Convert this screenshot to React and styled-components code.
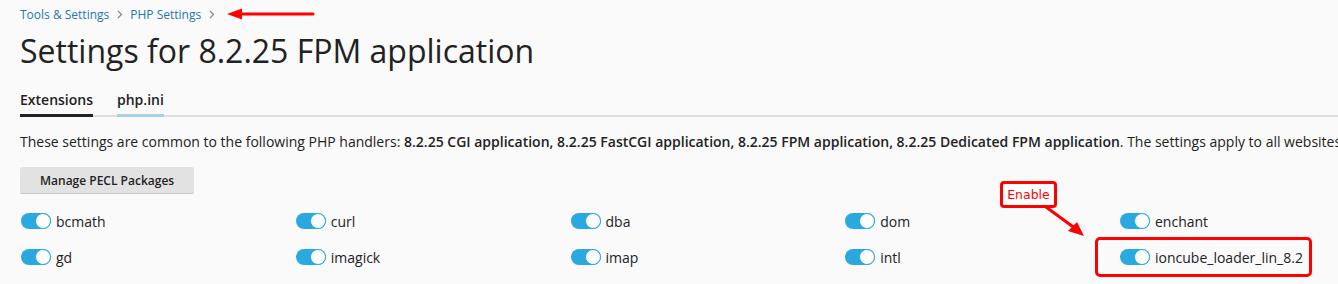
import React from 'react';
import styled, { createGlobalStyle } from 'styled-components';

const GlobalStyle = createGlobalStyle`
  body {
    margin: 0;
    background: #fafafa;
    font-family: "Open Sans", "Liberation Sans", sans-serif;
    color: #222;
  }
`;

const Page = styled.div`
  position: relative;
  padding: 5px 0 0 20px;
  width: 1318px;
  height: 279px;
  overflow: hidden;
`;

const Breadcrumbs = styled.div`
  display: flex;
  align-items: center;
  height: 18px;
  font-size: 12px;
`;

const Crumb = styled.a`
  color: #1d76b0;
  text-decoration: none;
`;

const Chevron = styled.span`
  display: inline-flex;
  margin: 0 7px 0 8px;
`;

const Title = styled.h1`
  margin: 8px 0 0;
  font-size: 32px;
  font-weight: 400;
  line-height: 40px;
  color: #222;
  white-space: nowrap;
`;

const Tabs = styled.div`
  display: flex;
  gap: 24px;
  margin-top: 19px;
  border-bottom: 2px solid #dedede;
  width: 1400px;
`;

const Tab = styled.div`
  font-size: 14px;
  font-weight: 600;
  line-height: 20px;
  padding-bottom: 4px;
  margin-bottom: -2px;
  border-bottom: 3px solid ${p => (p.$active ? '#222' : '#a9d0e4')};
  color: #222;
`;

const Intro = styled.p`
  margin: 15px 0 0;
  font-size: 14px;
  line-height: 20px;
  white-space: nowrap;
  b {
    font-weight: 600;
  }
`;

const Button = styled.button`
  margin-top: 15px;
  height: 27px;
  padding: 0 20px;
  border: 0;
  border-bottom: 1px solid #c6c6c6;
  border-radius: 2px;
  background: #e2e2e2;
  font-family: inherit;
  font-size: 12px;
  font-weight: 600;
  color: #222;
`;

const Grid = styled.div`
  display: grid;
  grid-template-columns: repeat(5, 274.75px);
  row-gap: 18px;
  margin-top: 18px;
`;

const Item = styled.label`
  display: flex;
  align-items: center;
  gap: 5px;
  height: 18px;
  font-size: 14px;
  white-space: nowrap;
`;

const Track = styled.span`
  position: relative;
  width: 30px;
  height: 16px;
  margin-left: 1px;
  border-radius: 8px;
  background: #29a9df;
`;

const Knob = styled.span`
  position: absolute;
  right: 0;
  top: 0;
  width: 14px;
  height: 14px;
  border-radius: 50%;
  border: 1px solid #29a9df;
  background: #fff;
`;

const Note = styled.div`
  position: absolute;
  left: 1000px;
  top: 181px;
  width: 51px;
  height: 21px;
  border: 3px solid #f00;
  border-radius: 4px;
  background: #fff;
  color: #f00;
  font-family: "DejaVu Sans", Verdana, sans-serif;
  font-size: 12.5px;
  line-height: 21px;
  text-align: center;
`;

const Highlight = styled.div`
  position: absolute;
  left: 1095px;
  top: 237px;
  width: 211px;
  height: 34px;
  border: 3px solid #f00;
  border-radius: 5px;
`;

const Arrow = styled.svg`
  position: absolute;
  left: ${p => p.$x}px;
  top: ${p => p.$y}px;
`;

const extensions = [
  'bcmath', 'curl', 'dba', 'dom', 'enchant',
  'gd', 'imagick', 'imap', 'intl', 'ioncube_loader_lin_8.2',
];

const Toggle = () => (
  <Track>
    <Knob />
  </Track>
);

const ChevronIcon = () => (
  <Chevron>
    <svg width="6" height="9" viewBox="0 0 6 9">
      <path d="M1 1l3.5 3.5L1 8" fill="none" stroke="#888" strokeWidth="1.2" />
    </svg>
  </Chevron>
);

const App = () => (
  <>
    <GlobalStyle />
    <Page>
      <Breadcrumbs>
        <Crumb>Tools &amp; Settings</Crumb>
        <ChevronIcon />
        <Crumb>PHP Settings</Crumb>
        <ChevronIcon />
        <svg width="90" height="12" viewBox="0 0 90 12" style={{ marginLeft: 5 }}>
          <path d="M14 6H86" stroke="#f00" strokeWidth="3" strokeLinecap="round" />
          <path d="M0 6L15 0.5V11.5Z" fill="#f00" />
        </svg>
      </Breadcrumbs>
      <Title>Settings for 8.2.25 FPM application</Title>
      <Tabs>
        <Tab $active>Extensions</Tab>
        <Tab>php.ini</Tab>
      </Tabs>
      <Intro>
        These settings are common to the following PHP handlers:{' '}
        <b>8.2.25 CGI application, 8.2.25 FastCGI application, 8.2.25 FPM application, 8.2.25 Dedicated FPM application</b>.
        The settings apply to all websites that use these handlers.
      </Intro>
      <Button>Manage PECL Packages</Button>
      <Grid>
        {extensions.map(name => (
          <Item key={name}>
            <Toggle />
            {name}
          </Item>
        ))}
      </Grid>
      <Note>Enable</Note>
      <Arrow $x={1040} $y={204} width="50" height="36" viewBox="0 0 50 36">
        <path d="M6 3L36 25" stroke="#f00" strokeWidth="3" strokeLinecap="round" />
        <path d="M44 32L28 27L37 18Z" fill="#f00" />
      </Arrow>
      <Highlight />
    </Page>
  </>
);

export default App;
